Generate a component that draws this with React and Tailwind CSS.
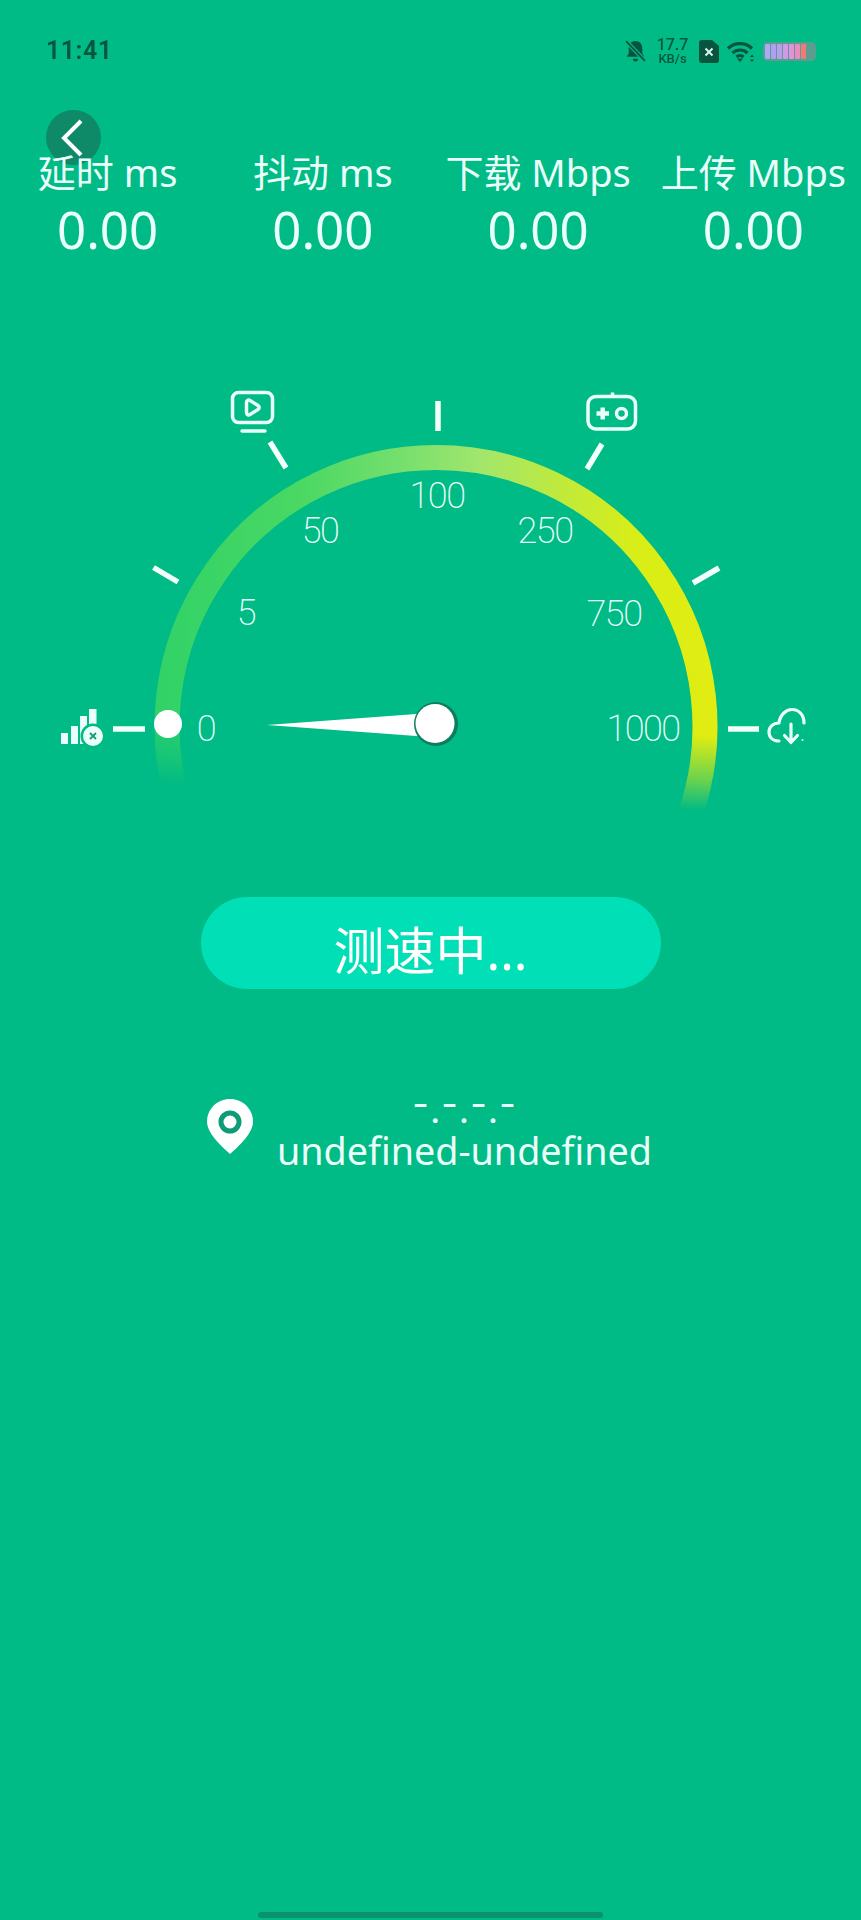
const stats = [
  { label: "延时 ms", value: "0.00" },
  { label: "抖动 ms", value: "0.00" },
  { label: "下载 Mbps", value: "0.00" },
  { label: "上传 Mbps", value: "0.00" },
];

// scale numbers sit on the dial, so each one keeps its own spot
const scale = [
  { text: "0", pos: "left-[206px] top-[349px]" },
  { text: "5", pos: "left-[246px] top-[233px]" },
  { text: "50", pos: "left-[320px] top-[151px]" },
  { text: "100", pos: "left-[437px] top-[116px]" },
  { text: "250", pos: "left-[545px] top-[151px]" },
  { text: "750", pos: "left-[614px] top-[234px]" },
  { text: "1000", pos: "left-[643px] top-[349px]" },
];

const batterySegments = [
  "bg-[#a9aaf2]",
  "bg-[#ae9ff2]",
  "bg-[#bc9cee]",
  "bg-[#cf9ae6]",
  "bg-[#e291da]",
  "bg-[#ea8cc0]",
  "bg-[#f07a78]",
];

function StatusBar() {
  return (
    <div className="h-[102px] flex items-center justify-between pl-[46px] pr-[45px] blur-[0.7px] text-[#07543f]">
      <span className="text-[25px] font-semibold font-['Roboto',sans-serif] tracking-[0.5px]">11:41</span>
      <div className="flex items-center">
        <svg width="21" height="23" viewBox="0 0 20 22" fill="#07543f">
          <path d="M10 1c4 0 6.500 3 6.500 7v5l2 3H1.500l2-3V8c0-4 2.500-7 6.500-7zM7.500 18h5a2.500 2.500 0 0 1-5 0z" />
          <path d="M1 1l18 19" stroke="#00bb85" strokeWidth="4" />
          <path d="M1 1l18 19" stroke="#07543f" strokeWidth="1.800" />
        </svg>
        <div className="ml-[11px] w-[31px] flex flex-col items-center font-['Roboto',sans-serif] font-medium leading-none">
          <span className="text-[16px] leading-[15px]">17.7</span>
          <span className="text-[13px] leading-[13px]">KB/s</span>
        </div>
        <svg className="ml-[11px]" width="20" height="23" viewBox="0 0 20 23">
          <path d="M3 0h10l7 6v14a3 3 0 0 1-3 3H3a3 3 0 0 1-3-3V3a3 3 0 0 1 3-3z" fill="#07543f" />
          <path d="M6.500 8.500l7 7M13.500 8.500l-7 7" stroke="#d8f5ec" strokeWidth="2" />
        </svg>
        <svg className="ml-[8px]" width="27" height="21" viewBox="0 0 27 21" fill="none" stroke="#07543f" strokeWidth="3.200">
          <path d="M1 7.500c6.500-6.500 17.500-6.500 24 0" />
          <path d="M5.500 12c4-4 11-4 15 0" />
          <path d="M9.500 16c2-2 5-2 7 0" />
          <path d="M10 17.500l3 3.500 3-3.500z" fill="#07543f" strokeWidth="0" />
          <path d="M25 13.500l-2 2.500h4zM25 21l-2-2.500h4z" fill="#07543f" strokeWidth="0" />
        </svg>
        <div className="ml-[9px] w-[53px] h-[19px] rounded-[5px] bg-[#5d9c90] flex gap-[1px] p-[2px] pr-[10px] overflow-hidden">
          {batterySegments.map((color) => (
            <div key={color} className={`flex-1 rounded-[1px] ${color}`}></div>
          ))}
        </div>
      </div>
    </div>
  );
}

function GaugeArt() {
  return (
    <svg className="absolute inset-0" width="861" height="450" viewBox="0 380 861 450" fill="none">
      <defs>
        <linearGradient id="arcColor" gradientUnits="userSpaceOnUse" x1="155" y1="0" x2="717" y2="0">
          <stop offset="0" stopColor="#30d268" />
          <stop offset="0.26" stopColor="#4ad863" />
          <stop offset="0.44" stopColor="#76df6e" />
          <stop offset="0.58" stopColor="#a2e66c" />
          <stop offset="0.72" stopColor="#bfea3c" />
          <stop offset="0.86" stopColor="#d8ee16" />
          <stop offset="1" stopColor="#e2ec12" />
        </linearGradient>
        {/* the left end of the arc fades out a little earlier than the right */}
        <linearGradient id="arcFade" gradientUnits="userSpaceOnUse" x1="170" y1="710" x2="166.400" y2="785">
          <stop offset="0" stopColor="#fff" />
          <stop offset="0.6" stopColor="#777" />
          <stop offset="1" stopColor="#000" />
        </linearGradient>
        <mask id="arcMask" maskUnits="userSpaceOnUse" x="0" y="380" width="861" height="450">
          <rect x="0" y="380" width="861" height="450" fill="url(#arcFade)" />
        </mask>
      </defs>

      <path d="M182 815A269 269 0 1 1 690 815" stroke="url(#arcColor)" strokeWidth="25" mask="url(#arcMask)" />

      {/* ticks */}
      <g stroke="#f2fffb" strokeWidth="5.500">
        <path d="M113 729H145" />
        <path d="M153.500 567.500L178 582" />
        <path d="M270 442L286 468" />
        <path d="M438 401V431" />
        <path d="M602 444L587 469" />
        <path d="M719 568L693 583" />
        <path d="M728 729H759" />
      </g>

      {/* needle and hub */}
      <path d="M267 725L423 713.500V736.500Z" fill="#fff" />
      <circle cx="436" cy="724" r="22" fill="#0c7d5e" />
      <circle cx="435" cy="723.500" r="19.500" fill="#fff" />

      {/* start dot */}
      <circle cx="168" cy="724" r="14" fill="#fff" />

      {/* signal icon */}
      <g fill="#eafff9">
        <rect x="61" y="733" width="7" height="11" />
        <rect x="71" y="726" width="7" height="18" />
        <rect x="80" y="716" width="7" height="28" />
        <rect x="89" y="709" width="7.500" height="15" />
      </g>
      <circle cx="93" cy="736" r="12.500" fill="#00bb85" />
      <circle cx="93" cy="736" r="10" fill="#eafff9" />
      <path d="M90 733l6 6M96 733l-6 6" stroke="#1c9a78" strokeWidth="1.800" />

      {/* video icon */}
      <g stroke="#eafff9" strokeWidth="3.500" strokeLinecap="round" strokeLinejoin="round">
        <rect x="232.500" y="392.500" width="40" height="30" rx="6" />
        <path d="M246.500 402.500c0-2 2-3 3.500-2l8 5c1.500 1 1.500 3 0 4l-8 5c-1.500 1-3.500 0-3.500-2z" />
        <path d="M242 431H265" />
      </g>

      {/* game icon */}
      <g stroke="#eafff9" strokeWidth="3.500">
        <rect x="588" y="396.500" width="47.500" height="32.500" rx="8" />
        <path d="M612.500 392.500V396" />
        <path d="M596.500 413.500H609M602.700 407.500V419.500" strokeWidth="4.500" />
        <circle cx="621.500" cy="413.500" r="5" />
      </g>

      {/* cloud download icon */}
      <g stroke="#eafff9" strokeWidth="3.200" strokeLinecap="round" strokeLinejoin="round">
        <path d="M779 741C772.500 741 769 737 769 732C769 727 773 723 779 723C780 715 786 709.500 792 709.500C799 709.500 804 715 804 723" />
        <path d="M791 724V742M784.500 735.500L791 742.500L797.500 735.500" />
      </g>
      <circle cx="802.500" cy="740" r="1" fill="#eafff9" />
    </svg>
  );
}

function Pin() {
  return (
    <svg className="mt-[4px] shrink-0" width="46" height="55" viewBox="0 0 46 55">
      <path d="M23 0C35.700 0 46 10 46 22.500C46 34 33 46 23 55C13 46 0 34 0 22.500C0 10 10.300 0 23 0Z" fill="#fff" />
      <circle cx="23" cy="23" r="9" fill="#fff" stroke="#0e9c77" strokeWidth="5" />
    </svg>
  );
}

export default function App() {
  return (
    <div className="relative w-[861px] h-[1920px] flex flex-col overflow-hidden bg-[#00bb85] text-[#ebfffa] font-['Noto_Sans','Noto_Sans_CJK_SC',sans-serif]">
      <StatusBar />

      <button className="absolute left-[46px] top-[110px] w-[55px] h-[55px] rounded-full bg-[#0e8a68] flex items-center justify-center">
        <svg className="-ml-[4px]" width="24" height="38" viewBox="0 0 24 38" fill="none" stroke="#fff" strokeWidth="4">
          <path d="M21 2L4 19L21 36" />
        </svg>
      </button>

      <div className="relative grid grid-cols-4 mt-[46px]">
        {stats.map((item) => (
          <div key={item.label} className="flex flex-col items-center">
            <span className="text-[38px] leading-[49px]">{item.label}</span>
            <span className="text-[51px] leading-[64px]">{item.value}</span>
          </div>
        ))}
      </div>

      <div className="relative h-[450px] mt-[119px]">
        <GaugeArt />
        {scale.map((s) => (
          <span
            key={s.text}
            className={`absolute -translate-x-1/2 -translate-y-1/2 text-[36px] leading-none font-extralight tracking-[-1.500px] font-['Roboto',sans-serif] ${s.pos}`}
          >
            {s.text}
          </span>
        ))}
      </div>

      <button className="mt-[67px] mx-auto w-[460px] h-[92px] pt-[14px] rounded-full bg-[#00dfb6] text-white text-[51px] leading-none flex items-center justify-center">
        测速中...
      </button>

      <div className="mt-[106px] ml-[207px] flex gap-[24px]">
        <Pin />
        <div className="flex flex-col items-center">
          <div className="h-[31px] flex text-[36px] leading-[31px] tracking-[1px] font-['Inter',sans-serif]">
            <span className="-translate-y-[6px]">-</span>
            <span>.</span>
            <span className="-translate-y-[6px]">-</span>
            <span>.</span>
            <span className="-translate-y-[6px]">-</span>
            <span>.</span>
            <span className="-translate-y-[6px]">-</span>
          </div>
          <span className="text-[37.700px] leading-[50px]">undefined-undefined</span>
        </div>
      </div>

      <div className="mt-auto mb-[2px] mx-auto w-[345px] h-[6px] rounded-full bg-[#0a9270]"></div>
    </div>
  );
}
